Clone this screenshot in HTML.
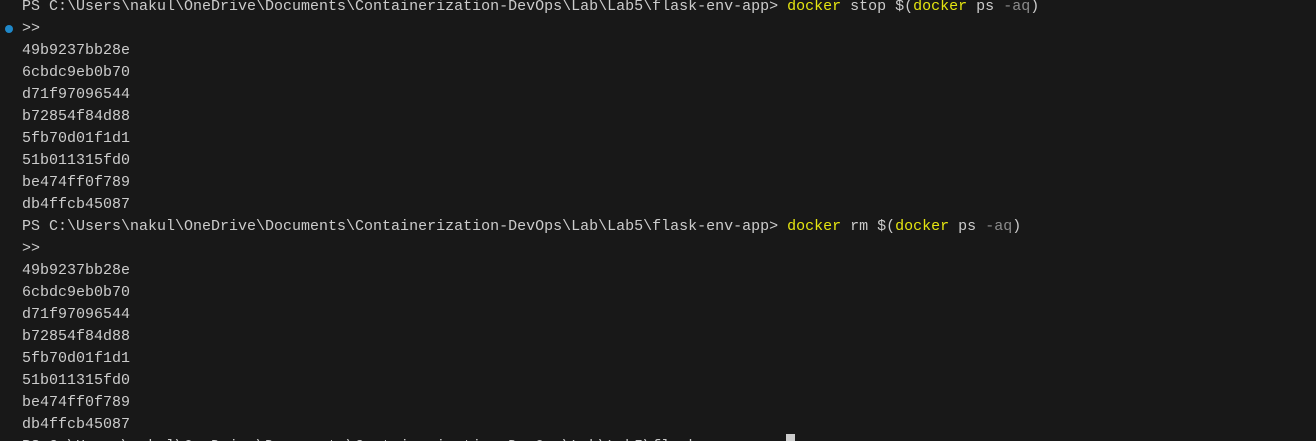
<!DOCTYPE html>
<html style="overflow:hidden;height:441px"><head><meta charset="utf-8"><style>
html,body{margin:0;padding:0;background:#181818;width:1316px;height:441px;overflow:hidden}
.wrap{position:relative;width:1316px;height:441px;overflow:hidden}
.t{position:absolute;left:22px;top:-4px;font-family:"Liberation Mono",monospace;font-size:15px;line-height:22px;color:#cccccc;white-space:pre}
.y{color:#e5e510}.g{color:#8b8b8b}
.dot{position:absolute;left:5px;width:8px;height:8px;border-radius:50%;background:#1f88c9}
.cur{position:absolute;left:786px;top:434px;width:9px;height:7px;background:#cccccc}
</style></head><body><div class="wrap">
<div class="dot" style="top:25px"></div>
<div class="t">PS C:\Users\nakul\OneDrive\Documents\Containerization-DevOps\Lab\Lab5\flask-env-app&gt; <span class="y">docker</span> stop $(<span class="y">docker</span> ps <span class="g">-aq</span>)
&gt;&gt;
49b9237bb28e
6cbdc9eb0b70
d71f97096544
b72854f84d88
5fb70d01f1d1
51b011315fd0
be474ff0f789
db4ffcb45087
PS C:\Users\nakul\OneDrive\Documents\Containerization-DevOps\Lab\Lab5\flask-env-app&gt; <span class="y">docker</span> rm $(<span class="y">docker</span> ps <span class="g">-aq</span>)
&gt;&gt;
49b9237bb28e
6cbdc9eb0b70
d71f97096544
b72854f84d88
5fb70d01f1d1
51b011315fd0
be474ff0f789
db4ffcb45087
PS C:\Users\nakul\OneDrive\Documents\Containerization-DevOps\Lab\Lab5\flask-env-app&gt; </div>
<div class="cur"></div>
</div></body></html>
